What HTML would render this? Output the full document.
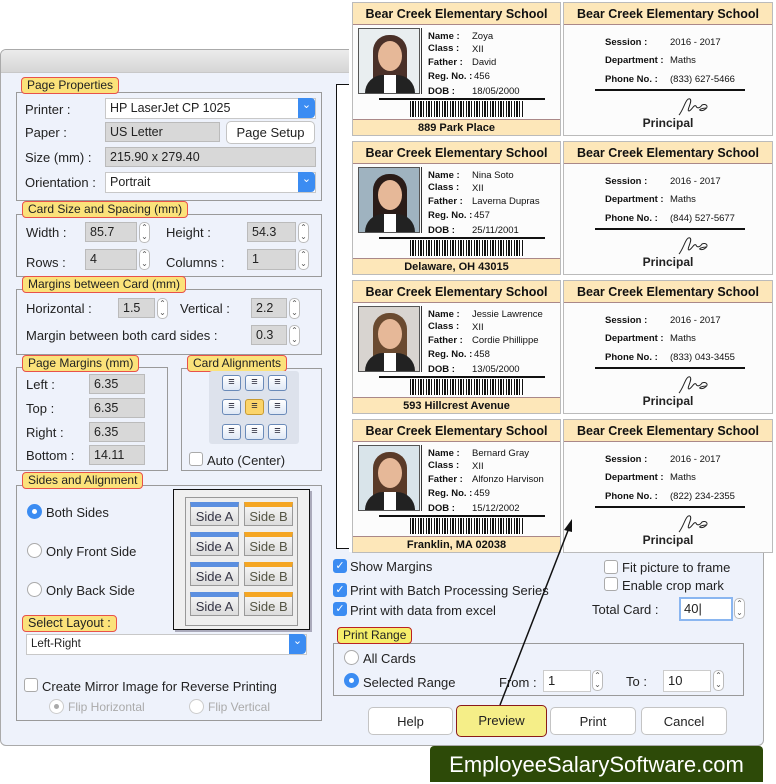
<!DOCTYPE html>
<html><head><meta charset="utf-8"><style>
*{box-sizing:border-box;margin:0;padding:0}
body{width:776px;height:782px;position:relative;overflow:hidden;background:#fff;font-family:"Liberation Sans",sans-serif;font-size:13px;color:#222}
.a{position:absolute}
.dlg{left:0;top:49px;width:764px;height:697px;background:#eef2fb;border:1px solid #aaa;border-radius:6px;overflow:hidden}
.tb{left:0;top:0;width:764px;height:23px;background:linear-gradient(#ececec,#d6d6d6);border-bottom:1px solid #c8c8c8}
.box{border:1px solid #9a9a9a}
.lbl{background:#fbe27a;border:1px solid #e8524a;border-radius:4px;font-size:12px;padding:0 5px;height:17px;line-height:15px;color:#222;white-space:nowrap}
.fld{background:#d8d8d8;border:1px solid #bbb;font-size:12.5px;padding-left:4px;line-height:18px}
.sel{background:#fff;border:1px solid #c8c8c8;font-size:12.5px;padding-left:4px;line-height:19px}
.sel:after{content:"⌄";position:absolute;right:0;top:-1px;width:17px;height:20px;background:#3b8cf2;color:#fff;border-radius:0 4px 4px 0;text-align:center;font-size:11px;line-height:14px}
.sp{width:11px;height:21px;border:1px solid #bbb;border-radius:5px;background:#fff;font-size:8px;line-height:9px;text-align:center;color:#555}
.t{font-size:13px;white-space:nowrap}
.btn{background:#fff;border:1px solid #c4c4c4;border-radius:5px;text-align:center;font-size:13px;line-height:27px}
.rad{width:15px;height:15px;border-radius:50%;border:1px solid #aaa;background:#fff}
.rad.on{background:#3b8cf2;border-color:#3b8cf2}
.rad.on:after{content:"";position:absolute;left:4px;top:4px;width:5px;height:5px;border-radius:50%;background:#fff}
.cb{width:14px;height:14px;border:1px solid #aaa;border-radius:3px;background:#fff}
.cb.on{background:#3b8cf2;border-color:#3b8cf2;color:#fff;font-size:11px;line-height:12px;text-align:center}
.tile{width:49px;height:24px;border:1px solid #999;background:linear-gradient(#f4f4f4,#dcdcdc);font-size:13px;text-align:center;line-height:27px}
.tile.a1{border-top:5px solid #5b8fe0;color:#334;line-height:19px}
.tile.b1{border-top:5px solid #f5a623;color:#554;line-height:19px}
.ai{width:19px;height:16px;border:1px solid #6a8ab8;border-radius:3px;background:linear-gradient(#fff,#dfe8f5);font-size:11px;line-height:13px;text-align:center;color:#223}
.card{width:209px;height:134px;background:#fcfcfc;border:1px solid #bbb}
.hd{position:absolute;left:0;top:0;width:100%;height:22px;background:#fde7b9;border-bottom:1px solid #a88;font-weight:bold;font-size:12.5px;text-align:center;line-height:22px;color:#111}
.ft{position:absolute;left:0;bottom:0;width:100%;height:16px;background:#fde7b9;border-top:1px solid #a88;font-weight:bold;font-size:11px;text-align:center;line-height:16px;color:#111}
.ph{position:absolute;left:5px;top:25px;width:62px;height:66px;border:1px solid #555;background:#c9d0d6;overflow:hidden}
.k{position:absolute;font-size:9.5px;font-weight:bold;color:#111;white-space:nowrap}
.v{position:absolute;font-size:9.5px;color:#111;white-space:nowrap}
.ln{position:absolute;height:2px;background:#111}
.bc{position:absolute;left:57px;top:98px;width:114px;height:16px;background:repeating-linear-gradient(90deg,#111 0 1px,#fff 1px 2px,#111 2px 4px,#fff 4px 5px,#111 5px 6px,#fff 6px 8px)}
</style></head><body>

<div class="a dlg">
 <div class="a tb"></div>
</div>

<div class="a box" style="left:16px;top:92px;width:306px;height:109px"></div>
<div class="a lbl" style="left:21px;top:77px">Page Properties</div>
<div class="a t" style="left:25px;top:102px">Printer :</div>
<div class="a sel" style="left:105px;top:98px;width:211px;height:21px">HP LaserJet CP 1025</div>
<div class="a t" style="left:25px;top:125px">Paper :</div>
<div class="a fld" style="left:105px;top:122px;width:115px;height:20px">US Letter</div>
<div class="a btn" style="left:226px;top:121px;width:89px;height:23px;line-height:21px">Page Setup</div>
<div class="a t" style="left:25px;top:150px">Size (mm) :</div>
<div class="a fld" style="left:105px;top:147px;width:211px;height:20px">215.90 x 279.40</div>
<div class="a t" style="left:25px;top:175px">Orientation :</div>
<div class="a sel" style="left:105px;top:172px;width:211px;height:21px">Portrait</div>

<div class="a box" style="left:16px;top:214px;width:306px;height:63px"></div>
<div class="a lbl" style="left:22px;top:201px">Card Size and Spacing (mm)</div>
<div class="a t" style="left:26px;top:225px">Width :</div>
<div class="a fld" style="left:85px;top:222px;width:52px;height:20px">85.7</div>
<div class="a sp" style="left:139px;top:222px">⌃<br>⌄</div>
<div class="a t" style="left:166px;top:225px">Height :</div>
<div class="a fld" style="left:247px;top:222px;width:49px;height:20px">54.3</div>
<div class="a sp" style="left:298px;top:222px">⌃<br>⌄</div>
<div class="a t" style="left:26px;top:255px">Rows :</div>
<div class="a fld" style="left:85px;top:249px;width:52px;height:21px">4</div>
<div class="a sp" style="left:139px;top:249px">⌃<br>⌄</div>
<div class="a t" style="left:166px;top:255px">Columns :</div>
<div class="a fld" style="left:247px;top:249px;width:49px;height:21px">1</div>
<div class="a sp" style="left:298px;top:249px">⌃<br>⌄</div>

<div class="a box" style="left:16px;top:289px;width:306px;height:66px"></div>
<div class="a lbl" style="left:22px;top:276px">Margins between Card (mm)</div>
<div class="a t" style="left:26px;top:301px">Horizontal :</div>
<div class="a fld" style="left:118px;top:298px;width:37px;height:20px">1.5</div>
<div class="a sp" style="left:157px;top:298px">⌃<br>⌄</div>
<div class="a t" style="left:180px;top:301px">Vertical :</div>
<div class="a fld" style="left:251px;top:298px;width:36px;height:20px">2.2</div>
<div class="a sp" style="left:289px;top:298px">⌃<br>⌄</div>
<div class="a t" style="left:26px;top:328px">Margin between both card sides :</div>
<div class="a fld" style="left:251px;top:325px;width:36px;height:20px">0.3</div>
<div class="a sp" style="left:289px;top:325px">⌃<br>⌄</div>

<div class="a box" style="left:16px;top:367px;width:152px;height:104px"></div>
<div class="a lbl" style="left:22px;top:355px">Page Margins (mm)</div>
<div class="a t" style="left:26px;top:377px">Left :</div>
<div class="a fld" style="left:89px;top:374px;width:56px;height:20px">6.35</div>
<div class="a t" style="left:26px;top:401px">Top :</div>
<div class="a fld" style="left:89px;top:398px;width:56px;height:20px">6.35</div>
<div class="a t" style="left:26px;top:425px">Right :</div>
<div class="a fld" style="left:89px;top:422px;width:56px;height:20px">6.35</div>
<div class="a t" style="left:26px;top:448px">Bottom :</div>
<div class="a fld" style="left:89px;top:445px;width:56px;height:20px">14.11</div>

<div class="a box" style="left:181px;top:368px;width:141px;height:103px"></div>
<div class="a lbl" style="left:187px;top:355px">Card Alignments</div>
<div class="a" style="left:209px;top:371px;width:90px;height:73px;background:#dde2ec;border-radius:3px"></div>
<div class="a ai" style="left:222px;top:375px">≡</div><div class="a ai" style="left:245px;top:375px">≡</div><div class="a ai" style="left:268px;top:375px">≡</div>
<div class="a ai" style="left:222px;top:399px">≡</div><div class="a ai" style="left:245px;top:399px;background:#fbd46a;border-color:#c89a30">≡</div><div class="a ai" style="left:268px;top:399px">≡</div>
<div class="a ai" style="left:222px;top:424px">≡</div><div class="a ai" style="left:245px;top:424px">≡</div><div class="a ai" style="left:268px;top:424px">≡</div>
<div class="a cb" style="left:189px;top:452px"></div>
<div class="a t" style="left:207px;top:453px">Auto (Center)</div>

<div class="a box" style="left:16px;top:485px;width:306px;height:236px"></div>
<div class="a lbl" style="left:22px;top:472px">Sides and Alignment</div>
<div class="a rad on" style="left:27px;top:504px"></div><div class="a t" style="left:46px;top:505px">Both Sides</div>
<div class="a rad" style="left:27px;top:543px"></div><div class="a t" style="left:46px;top:544px">Only Front Side</div>
<div class="a rad" style="left:27px;top:582px"></div><div class="a t" style="left:46px;top:583px">Only Back Side</div>
<div class="a" style="left:173px;top:489px;width:137px;height:141px;border:1px solid #111;background:#f0f0f0;box-shadow:2px 2px 0 #aab"></div>
<div class="a" style="left:185px;top:497px;width:113px;height:129px;border:1px solid #999;background:#eee"></div>
<div class="a tile a1" style="left:190px;top:502px">Side A</div><div class="a tile b1" style="left:244px;top:502px">Side B</div>
<div class="a tile a1" style="left:190px;top:532px">Side A</div><div class="a tile b1" style="left:244px;top:532px">Side B</div>
<div class="a tile a1" style="left:190px;top:562px">Side A</div><div class="a tile b1" style="left:244px;top:562px">Side B</div>
<div class="a tile a1" style="left:190px;top:592px">Side A</div><div class="a tile b1" style="left:244px;top:592px">Side B</div>
<div class="a lbl" style="left:22px;top:615px;font-size:12.5px">Select Layout :</div>
<div class="a sel" style="left:26px;top:634px;width:281px;height:21px;font-size:11.5px">Left-Right</div>
<div class="a cb" style="left:24px;top:678px"></div>
<div class="a t" style="left:42px;top:679px">Create Mirror Image for Reverse Printing</div>
<div class="a rad" style="left:49px;top:699px;border-color:#ccc"></div><div class="a" style="left:54px;top:704px;width:5px;height:5px;border-radius:50%;background:#aaa"></div>
<div class="a t" style="left:68px;top:700px;color:#aaa;font-size:12px">Flip Horizontal</div>
<div class="a rad" style="left:189px;top:699px;border-color:#ccc"></div>
<div class="a t" style="left:208px;top:700px;color:#aaa;font-size:12px">Flip Vertical</div>

<div class="a" style="left:336px;top:84px;width:20px;height:465px;border-left:1px solid #111;border-top:1px solid #111;border-bottom:1px solid #111;background:#fff"></div>
<div class="a" style="left:349px;top:0;width:427px;height:552px;background:#fff"></div>

<div class="a cb on" style="left:333px;top:559px">✓</div><div class="a t" style="left:350px;top:559px">Show Margins</div>
<div class="a cb on" style="left:333px;top:583px">✓</div><div class="a t" style="left:350px;top:583px">Print with Batch Processing Series</div>
<div class="a cb on" style="left:333px;top:602px">✓</div><div class="a t" style="left:350px;top:603px">Print with data from excel</div>
<div class="a cb" style="left:604px;top:560px"></div><div class="a t" style="left:622px;top:560px">Fit picture to frame</div>
<div class="a cb" style="left:604px;top:577px"></div><div class="a t" style="left:622px;top:578px">Enable crop mark</div>
<div class="a t" style="left:592px;top:602px">Total Card :</div>
<div class="a" style="left:679px;top:597px;width:54px;height:24px;border:2px solid #8ab6f0;background:#fff;font-size:13px;padding-left:3px;line-height:20px">40|</div>
<div class="a sp" style="left:734px;top:598px">⌃<br>⌄</div>

<div class="a box" style="left:333px;top:643px;width:411px;height:53px"></div>
<div class="a lbl" style="left:337px;top:627px;background:#f5ee6a;border-color:#b22">Print Range</div>
<div class="a rad" style="left:344px;top:650px"></div><div class="a t" style="left:363px;top:651px">All Cards</div>
<div class="a rad on" style="left:344px;top:673px"></div><div class="a t" style="left:363px;top:675px">Selected Range</div>
<div class="a t" style="left:499px;top:675px">From :</div>
<div class="a" style="left:543px;top:670px;width:48px;height:22px;border:1px solid #ccc;background:#fff;padding-left:4px;line-height:20px">1</div>
<div class="a sp" style="left:592px;top:670px">⌃<br>⌄</div>
<div class="a t" style="left:626px;top:674px">To :</div>
<div class="a" style="left:663px;top:670px;width:48px;height:22px;border:1px solid #ccc;background:#fff;padding-left:4px;line-height:20px">10</div>
<div class="a sp" style="left:713px;top:670px">⌃<br>⌄</div>

<div class="a btn" style="left:368px;top:707px;width:85px;height:28px">Help</div>
<div class="a btn" style="left:456px;top:705px;width:91px;height:32px;background:#f5ee88;border:1px solid #8a1a1a;line-height:30px">Preview</div>
<div class="a btn" style="left:550px;top:707px;width:86px;height:28px">Print</div>
<div class="a btn" style="left:641px;top:707px;width:86px;height:28px">Cancel</div>

<div class="a" style="left:430px;top:746px;width:333px;height:36px;background:#2d4a08;border-radius:4px 4px 0 0;color:#fff;font-size:22px;text-align:center;line-height:38px">EmployeeSalarySoftware.com</div>

<div id="cards"></div>
<script>
var d=[["Zoya","David","456","18/05/2000","889 Park Place","(833) 627-5466","#4a3028","#e9eef0"],
["Nina Soto","Laverna Dupras","457","25/11/2001","Delaware, OH 43015","(844) 527-5677","#2a1c18","#9fb3c0"],
["Jessie Lawrence","Cordie Phillippe","458","13/05/2000","593 Hillcrest Avenue","(833) 043-3455","#6a4a30","#d8d4d0"],
["Bernard Gray","Alfonzo Harvison","459","15/12/2002","Franklin, MA 02038","(822) 234-2355","#5a3a28","#d9e4ea"]];
var h="";
d.forEach(function(r,i){var y=2+i*139;
h+='<div class="a card" style="left:352px;top:'+y+'px"><div class="hd">Bear Creek Elementary School</div>'+
'<div class="ph" style="background:'+r[7]+'"><div class="a" style="left:14px;top:6px;width:34px;height:50px;border-radius:16px 16px 6px 6px;background:'+r[6]+'"></div><div class="a" style="left:19px;top:12px;width:24px;height:30px;border-radius:50%;background:#e6b898"></div><div class="a" style="left:6px;top:46px;width:50px;height:24px;border-radius:18px 18px 0 0;background:#222"></div><div class="a" style="left:25px;top:46px;width:12px;height:20px;background:#fff"></div></div>'+
'<div class="a" style="left:68px;top:25px;width:1px;height:66px;background:#333"></div>'+
'<div class="k" style="left:75px;top:28px">Name :</div><div class="v" style="left:119px;top:28px">'+r[0]+'</div>'+
'<div class="k" style="left:75px;top:40px">Class :</div><div class="v" style="left:119px;top:41px">XII</div>'+
'<div class="k" style="left:75px;top:54px">Father :</div><div class="v" style="left:119px;top:54px">'+r[1]+'</div>'+
'<div class="k" style="left:75px;top:68px">Reg. No. :</div><div class="v" style="left:121px;top:68px">'+r[2]+'</div>'+
'<div class="k" style="left:75px;top:83px">DOB :</div><div class="v" style="left:119px;top:83px">'+r[3]+'</div>'+
'<div class="ln" style="left:26px;top:95px;width:166px"></div><div class="bc"></div>'+
'<div class="ft">'+r[4]+'</div></div>';
h+='<div class="a card" style="left:563px;top:'+y+'px;width:210px"><div class="hd">Bear Creek Elementary School</div>'+
'<div class="k" style="left:41px;top:34px">Session :</div><div class="v" style="left:106px;top:34px">2016 - 2017</div>'+
'<div class="k" style="left:41px;top:52px">Department :</div><div class="v" style="left:106px;top:52px">Maths</div>'+
'<div class="k" style="left:41px;top:71px">Phone No. :</div><div class="v" style="left:106px;top:71px">'+r[5]+'</div>'+
'<div class="ln" style="left:31px;top:86px;width:150px"></div>'+
'<svg class="a" style="left:112px;top:92px" width="36" height="22"><path d="M3 20 C8 14 10 2 14 4 C17 6 10 16 13 16 C16 15 18 9 20 11 C21 14 24 13 26 10 C30 8 34 12 28 15 C24 17 20 14 30 13" fill="none" stroke="#222" stroke-width="1"/></svg>'+
'<div class="a" style="left:0;top:113px;width:100%;text-align:center;font-weight:bold;font-size:12px">Principal</div></div>';
});
document.getElementById("cards").innerHTML=h;
</script>
<svg class="a" style="left:0;top:0" width="776" height="782"><line x1="500" y1="705" x2="569" y2="528" stroke="#111" stroke-width="1.5"/><path d="M572 519 L564 530 L572 532 Z" fill="#111"/></svg>
</body></html>
